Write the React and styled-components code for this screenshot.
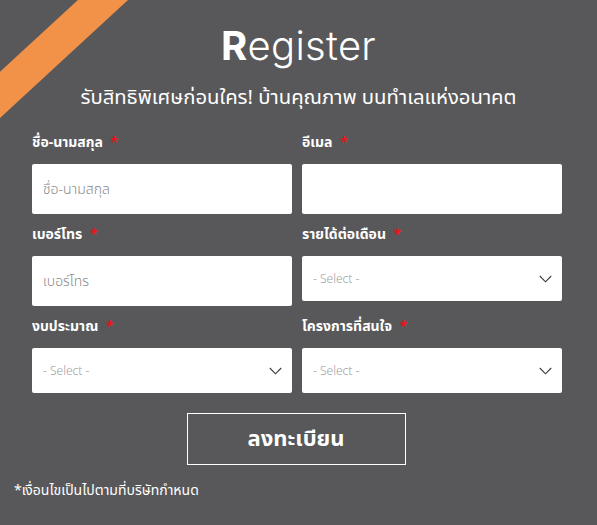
import React from "react";
import styled, { createGlobalStyle } from "styled-components";

const Global = createGlobalStyle`
  html, body { margin: 0; padding: 0; background: #58585a; }
  body { font-family: "Noto Sans Thai", "Noto Sans Thai Looped", Kanit, "Noto Sans", "DejaVu Sans", sans-serif; }
  * { box-sizing: border-box; }
`;

const Page = styled.div`
  position: relative;
  width: 597px;
  height: 525px;
  background: #58585a;
  overflow: hidden;
  color: #fff;
  padding-top: 22px;
`;

const Ribbon = styled.div`
  position: absolute;
  left: -68px;
  top: 30px;
  width: 240px;
  height: 34px;
  background: #f29148;
  transform: rotate(-42.7deg);
  transform-origin: center;
`;

const Title = styled.h1`
  position: relative;
  margin: 0;
  text-align: center;
  font-family: Inter, "Noto Sans", sans-serif;
  font-weight: 300;
  font-size: 40px;
  line-height: 48px;
  letter-spacing: 0.3px;
  b { font-weight: 700; }
`;

const Subtitle = styled.p`
  position: relative;
  margin: 13px 0 0;
  text-align: center;
  font-size: 20.3px;
  line-height: 30px;
  font-weight: 400;
`;

const Form = styled.form`
  margin: 19px 0 0 32px;
  width: 530px;
  display: grid;
  grid-template-columns: 260px 260px;
  column-gap: 10px;
  row-gap: 10px;
`;

const Field = styled.div`
  display: flex;
  flex-direction: column;
`;

const Label = styled.label`
  font-size: 14px;
  font-weight: 700;
  line-height: 22px;
  height: 32px;
  span { color: #e8141c; margin-left: 4px; }
`;

const Input = styled.input`
  height: 50px;
  border: none;
  border-radius: 2px;
  background: #fff;
  padding: 0 11px;
  font-family: inherit;
  font-size: 14px;
  font-weight: 300;
  color: #333;
  outline: none;
  &::placeholder { color: #8a8a8a; }
`;

const SelectBox = styled.div`
  height: 45px;
  background: #fff;
  border-radius: 2px;
  display: flex;
  align-items: center;
  justify-content: space-between;
  padding: 0 10px 0 11px;
  font-family: "Noto Sans", sans-serif;
  font-size: 12px;
  font-weight: 300;
  color: #a0a0a0;
`;

const Chevron = () => (
  <svg width="13" height="8" viewBox="0 0 13 8" fill="none">
    <path d="M0.8 1 L6.5 6.8 L12.2 1" stroke="#3a3a3a" strokeWidth="1.1" />
  </svg>
);

const Actions = styled.div`
  display: flex;
  justify-content: center;
  margin-top: 20px;
`;

const Button = styled.button`
  width: 219px;
  height: 52px;
  background: transparent;
  border: 1px solid #fff;
  color: #fff;
  font-family: inherit;
  font-size: 22px;
  font-weight: 700;
  cursor: pointer;
  margin-left: -5px;
`;

const Note = styled.p`
  margin: 16px 0 0 14px;
  font-size: 14px;
  line-height: 20px;
`;

const Req = () => <span>*</span>;

function Select() {
  return (
    <SelectBox>
      <span>- Select -</span>
      <Chevron />
    </SelectBox>
  );
}

export default function App() {
  return (
    <Page>
      <Global />
      <Ribbon />
      <Title><b>R</b>egister</Title>
      <Subtitle>รับสิทธิพิเศษก่อนใคร! บ้านคุณภาพ บนทำเลแห่งอนาคต</Subtitle>
      <Form onSubmit={(e) => e.preventDefault()}>
        <Field>
          <Label>ชื่อ-นามสกุล <Req /></Label>
          <Input placeholder="ชื่อ-นามสกุล" />
        </Field>
        <Field>
          <Label>อีเมล <Req /></Label>
          <Input />
        </Field>
        <Field>
          <Label>เบอร์โทร <Req /></Label>
          <Input placeholder="เบอร์โทร" />
        </Field>
        <Field>
          <Label>รายได้ต่อเดือน <Req /></Label>
          <Select />
        </Field>
        <Field>
          <Label>งบประมาณ <Req /></Label>
          <Select />
        </Field>
        <Field>
          <Label>โครงการที่สนใจ <Req /></Label>
          <Select />
        </Field>
      </Form>
      <Actions>
        <Button type="button">ลงทะเบียน</Button>
      </Actions>
      <Note>*เงื่อนไขเป็นไปตามที่บริษัทกำหนด</Note>
    </Page>
  );
}
